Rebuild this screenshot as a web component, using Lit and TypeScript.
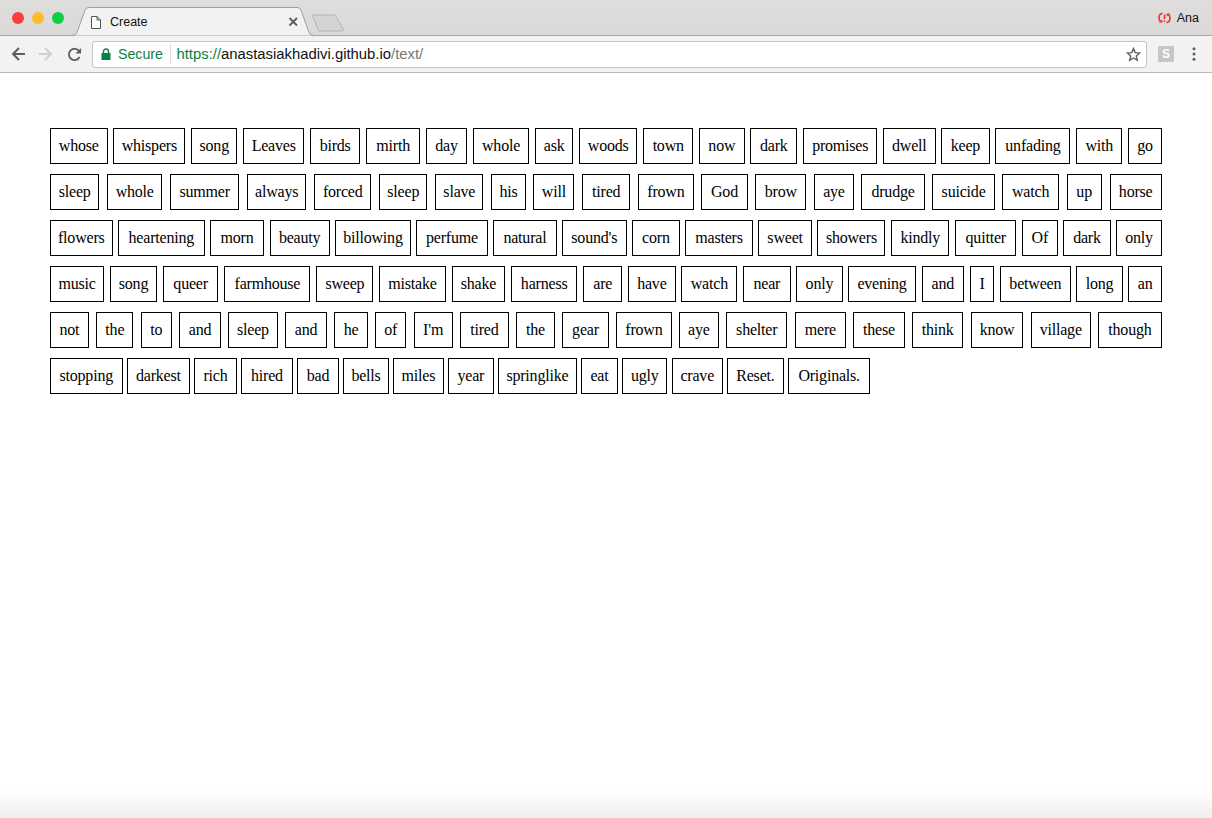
import { LitElement, html, css } from "lit";
import { customElement } from "lit/decorators.js";

type Word = [string, number];

const ROWS: Word[][] = [
  [["whose",57.6],["whispers",72.1],["song",46.3],["Leaves",61.2],["birds",50.3],["mirth",54.3],["day",41.1],["whole",56.6],["ask",38.3],["woods",58.3],["town",50.3],["now",45.5],["dark",47.1],["promises",74.3],["dwell",52.5],["keep",48.4],["unfading",75.1],["with",46.3],["go",33.6]],
  [["sleep",49.4],["whole",55.2],["summer",69.4],["always",59.2],["forced",57.4],["sleep",48.3],["slave",48.3],["his",34.5],["will",41],["tired",48.3],["frown",55.6],["God",46.1],["brow",51.2],["aye",39.6],["drudge",63.2],["suicide",62.4],["watch",56.3],["up",35.3],["horse",52.3]],
  [["flowers",62.5],["heartening",86.5],["morn",53.8],["beauty",60.2],["billowing",75.3],["perfume",71.6],["natural",63.2],["sound's",64.4],["corn",47.6],["masters",67.5],["sweet",53.5],["showers",68],["kindly",58.5],["quitter",61.4],["Of",35.6],["dark",47.6],["only",45.4]],
  [["music",54.2],["song",46.9],["queer",55.7],["farmhouse",86.2],["sweep",57.1],["mistake",66.5],["shake",53.6],["harness",66.2],["are",39.3],["have",47.3],["watch",56],["near",47.3],["only",46.2],["evening",67.3],["and",42.5],["I",24.3],["between",70.6],["long",46.2],["an",33.4]],
  [["not",38.7],["the",37.2],["to",30.7],["and",41.6],["sleep",49.2],["and",41.7],["he",33.3],["of",30.7],["I'm",39.2],["tired",48.3],["the",38.6],["gear",46.4],["frown",55.4],["aye",39.4],["shelter",61.2],["mere",50.9],["these",51.2],["think",51.2],["know",52.5],["village",59.7],["though",63.6]],
  [["stopping",72.5],["darkest",62.6],["rich",42.4],["hired",51.4],["bad",41.5],["bells",45.3],["miles",50.3],["year",45.5],["springlike",78.4],["eat",36.5],["ugly",45],["crave",50.7],["Reset.",56.5],["Originals.",81.8]],
];

@customElement("app-root")
export class AppRoot extends LitElement {
  static styles = css`
    :host { display: flex; flex-direction: column; height: 818px; width: 1212px; overflow: hidden; background: #fff; }
    .titlebar { height: 36px; flex: none; background: linear-gradient(#e0dddd, #dbd8d8); border-bottom: 1px solid #a9a7a7; display: flex; align-items: center; box-sizing: border-box; position: relative; font-family: "Liberation Sans", Arial, sans-serif; font-size: 12.5px; color: #111; }
    .lights { display: flex; gap: 8px; margin-left: 12px; position: relative; z-index: 1; }
    .lights i { width: 12px; height: 12px; border-radius: 50%; display: block; }
    .tabshape { position: absolute; left: 70px; top: 6px; }
    .tabtext { position: absolute; left: 110px; top: 15px; line-height: 14px; }
    .user { margin-left: auto; margin-right: 13px; display: flex; align-items: center; gap: 6px; }
    .user svg { margin-left: 1px; }
    .toolbar { height: 37px; flex: none; background: #f2f2f2; border-bottom: 1px solid #b9b9b9; box-sizing: border-box; display: flex; align-items: center; font-family: "Liberation Sans", Arial, sans-serif; }
    .nav { display: flex; align-items: center; gap: 14px; margin-left: 11px; }
    .nav svg { display: block; }
    .omni { margin-left: 10px; width: 1055px; height: 27px; box-sizing: border-box; background: #fff; border: 1px solid #c4c4c4; border-radius: 3px; display: flex; align-items: center; white-space: nowrap; }
    .lock { margin-left: 8px; margin-right: 7px; display: block; }
    .secure { color: #0b8043; padding-right: 7px; border-right: 1px solid #dcdcdc; line-height: 20px; font-size: 14.2px; }
    .url { margin-left: 5.5px; color: #111; font-size: 14.85px; }
    .https { color: #0b8043; }
    .path { color: #777; }
    .star { margin-left: auto; margin-right: 5.5px; display: block; }
    .ext { margin-left: 11px; width: 16px; height: 16px; background: #c6c6c6; color: #fff; border-radius: 1px; font-size: 12px; font-weight: 700; display: flex; align-items: center; justify-content: center; }
    .menu { margin-left: 18px; display: block; }
    .page { flex: 1; padding: 55px 50px 0; background: linear-gradient(#fff 0, #fff calc(100% - 28px), #eeeeee 100%); display: flex; flex-direction: column; gap: 10px; }
    .row { display: flex; justify-content: space-between; }
    .row.last { justify-content: flex-start; gap: 4.6px; }
    .w { flex: none; height: 36px; box-sizing: border-box; border: 1px solid #000; background: #fff; color: #000; font-family: "Liberation Serif", "Times New Roman", serif; font-size: 16px; letter-spacing: -0.2px; display: flex; align-items: center; justify-content: center; white-space: nowrap; }
  `;

  render() {
    return html`
      <div class="titlebar">
        <svg class="tabshape" width="280" height="31" viewBox="0 0 280 31">
          <path d="M242.5 9.5 Q242 9 243.5 9 L264 9 Q265.5 9 266 10.5 L273 23 Q274 25 272 25 L250 25 Q248.5 25 248 23.5 Z" fill="#d6d3d3" stroke="#b5b3b3"/>
          <path d="M2 29.5 Q6 29.5 7 26.5 L15 4 Q16 1.5 19 1.5 L227 1.5 Q230 1.5 231 4 L239 26.5 Q240 29.5 244 29.5" fill="#f2f2f2" stroke="#9f9d9d"/>
          <path d="M3 30.5 H243" stroke="#f2f2f2" fill="none"/>
          <path d="M21.5 10.5 H27 L30.5 14 V22.5 H21.5 Z M27 10.5 V14 H30.5" fill="#fff" stroke="#555"/>
          <path d="M219.5 12 L227 19.5 M227 12 L219.5 19.5" stroke="#5c5c5c" stroke-width="1.8"/>
        </svg>
        <div class="lights">
          <i style="background:#fc3d39"></i><i style="background:#fdbc2c"></i><i style="background:#0fcf3f"></i>
        </div>
        <span class="tabtext">Create</span>
        <div class="user">
          <svg width="13" height="12" viewBox="0 0 13 12" fill="none" stroke="#e2342b" stroke-width="1.6">
            <path d="M4.5 1.3 Q1 2 1 6 Q1 8.2 2.6 9.6"/><path d="M8.5 10.7 Q12 10 12 6 Q12 3.8 10.4 2.4"/>
            <path d="M0.8 10.6 L4.4 10.6 L4.4 7.6 Z M12.2 1.4 L8.6 1.4 L8.6 4.4 Z" fill="#e2342b" stroke="none"/>
            <path d="M6.5 2.5 V7 M6.5 8.2 V9.8"/>
          </svg>
          <span>Ana</span>
        </div>
      </div>
      <div class="toolbar">
        <div class="nav">
          <svg width="14" height="14" viewBox="0 0 14 14" fill="none" stroke="#5f5f5f" stroke-width="2"><path d="M14 7 H2 M8 1 L2 7 L8 13"/></svg>
          <svg width="14" height="14" viewBox="0 0 14 14" fill="none" stroke="#d0d0d0" stroke-width="2"><path d="M0 7 H12 M6 1 L12 7 L6 13"/></svg>
          <svg width="15" height="15" viewBox="0 0 16 16" fill="none"><path d="M13.5 10.5 A6 6 0 1 1 13 4.5" stroke="#5f5f5f" stroke-width="2"/><path d="M15 1 V7 H9 Z" fill="#5f5f5f"/></svg>
        </div>
        <div class="omni">
          <svg class="lock" width="10" height="12" viewBox="0 0 10 12"><path d="M2.5 5.5 V3.5 A2.5 2.5 0 0 1 7.5 3.5 V5.5" fill="none" stroke="#0b8043" stroke-width="1.4"/><rect x="0.5" y="5" width="9" height="7" fill="#0b8043"/></svg>
          <span class="secure">Secure</span>
          <span class="url"><span class="https">https://</span>anastasiakhadivi.github.io<span class="path">/text/</span></span>
          <svg class="star" width="15" height="15" viewBox="0 0 15 15"><path d="M7.5 1.5 L9.2 5.6 L13.7 6 L10.3 8.9 L11.3 13.3 L7.5 11 L3.7 13.3 L4.7 8.9 L1.3 6 L5.8 5.6 Z" fill="none" stroke="#5f5f5f" stroke-width="1.4"/></svg>
        </div>
        <div class="ext">S</div>
        <svg class="menu" width="4" height="14" viewBox="0 0 4 14" fill="#5f5f5f"><circle cx="2" cy="1.7" r="1.5"/><circle cx="2" cy="7" r="1.5"/><circle cx="2" cy="12.3" r="1.5"/></svg>
      </div>
      <div class="page">
        ${ROWS.map((r, i) => html`<div class="row ${i === ROWS.length - 1 ? "last" : ""}">${r.map(([w, width]) => html`<div class="w" style="width:${width}px">${w}</div>`)}</div>`)}
      </div>
    `;
  }
}
